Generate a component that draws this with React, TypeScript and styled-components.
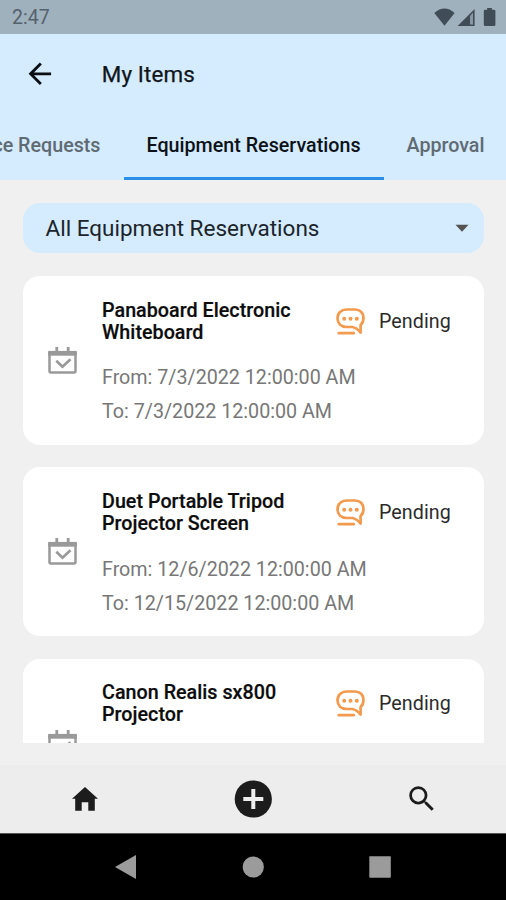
import React from 'react';
import styled, { createGlobalStyle } from 'styled-components';

const GlobalStyle = createGlobalStyle`
  * { box-sizing: border-box; }
  body { margin: 0; background: #f0f0f0; font-family: Roboto, "Liberation Sans", sans-serif; }
  svg { display: block; flex: none; }
`;

const Screen = styled.div`
  width: 506px;
  height: 900px;
  display: flex;
  flex-direction: column;
  overflow: hidden;
  background: #f0f0f0;
`;

const StatusBar = styled.div`
  height: 34px;
  flex: none;
  display: flex;
  align-items: center;
  justify-content: space-between;
  padding: 1px 9px 0 12px;
  background: #a0b1be;
  color: #54626d;
`;

const Clock = styled.span`
  font-size: 19.5px;
`;

const Header = styled.header`
  height: 146.3px;
  flex: none;
  display: flex;
  flex-direction: column;
  background: #d5ebfe;
`;

const TitleRow = styled.div`
  height: 79px;
  display: flex;
  align-items: center;
  padding-left: 23px;
  gap: 45px;
`;

const Title = styled.h1`
  margin: 0;
  font-size: 22.4px;
  font-weight: 400;
  letter-spacing: 0.15px;
  color: #10151a;
  -webkit-text-stroke: 0.25px currentColor;
`;

const Tabs = styled.nav`
  flex: 1;
  display: flex;
  overflow: hidden;
`;

const Tab = styled.div<{ $width: number; $active?: boolean; $alignEnd?: boolean }>`
  width: ${(p) => p.$width}px;
  flex: none;
  display: flex;
  align-items: center;
  justify-content: ${(p) => (p.$alignEnd ? 'flex-end' : 'flex-start')};
  padding: 1px 23px 0;
  white-space: nowrap;
  font-size: 19.7px;
  font-weight: 500;
  color: ${(p) => (p.$active ? '#0c1218' : '#5f6a73')};
  border-bottom: 3px solid ${(p) => (p.$active ? '#2a8fe8' : 'transparent')};
`;

const Content = styled.main`
  height: 562.7px;
  flex: none;
  padding: 22.7px 22px 0 23px;
  display: flex;
  flex-direction: column;
  gap: 22.8px;
  overflow: hidden;
`;

const Select = styled.div`
  height: 50.5px;
  flex: none;
  display: flex;
  align-items: center;
  justify-content: space-between;
  padding: 0 15px 0 22.5px;
  border-radius: 17px;
  background: #d5ebfe;
  font-size: 22.5px;
  color: #1b242b;
`;

const CardList = styled.div`
  display: flex;
  flex-direction: column;
  gap: 22.5px;
`;

const Card = styled.article`
  height: 168.7px;
  flex: none;
  display: grid;
  grid-template-columns: 79px 234px 1fr;
  border-radius: 17px;
  background: #fff;
`;

const IconCell = styled.div`
  display: flex;
  align-items: center;
  padding-left: 25px;
`;

const Details = styled.div`
  padding-top: 23.3px;
  white-space: nowrap;
`;

const ItemName = styled.h2`
  margin: 0 0 17px;
  font-size: 19.7px;
  line-height: 22.4px;
  font-weight: 500;
  letter-spacing: 0.03px;
  color: #0c0c0c;
  white-space: pre-line;
  -webkit-text-stroke: 0.2px currentColor;
`;

const DateLine = styled.p`
  margin: 0;
  font-size: 19.7px;
  line-height: 34px;
  color: #777;
`;

const Status = styled.div`
  height: 28px;
  margin-top: 31px;
  display: flex;
  align-items: center;
  gap: 14px;
  font-size: 19.7px;
  letter-spacing: 0.05px;
  color: #2b2b2b;
`;

const BottomNav = styled.nav`
  height: 68px;
  flex: none;
  margin-top: 22px;
  display: grid;
  grid-template-columns: repeat(3, 1fr);
  place-items: center;
  background: #ededed;
`;

const SystemNav = styled.div`
  flex: 1;
  display: flex;
  align-items: center;
  justify-content: space-between;
  padding: 0 115px;
  border-top: 1px solid #555;
  background: #000;
`;

const BackIcon = () => (
  <svg width="33.7" height="33.7" viewBox="0 0 24 24" fill="#0b0f13">
    <path d="M20 11H7.83l5.59-5.59L12 4l-8 8 8 8 1.41-1.41L7.83 13H20v-2z" />
  </svg>
);

const StatusIcons = () => (
  <svg width="64" height="19" viewBox="0 0 64 19" fill="#414d56">
    <path d="M1.300 4.900Q11.500-3.700 21.600 4.900L11.500 17.700z" />
    <path d="M24.600 18 41.600 1v17zM37 8.300v8h3V5.100z" fillRule="evenodd" />
    <path d="M37 8.300 40 5.100v11.200h-3z" fill="#8797a3" />
    <path d="M54.200 0h4.700v1.700h2.200q1.300 0 1.300 1.300v13.800q0 1.300-1.300 1.300h-9q-1.300 0-1.300-1.300V3q0-1.300 1.300-1.300h2.100z" />
  </svg>
);

const Caret = () => (
  <svg width="14" height="8" viewBox="0 0 14 8" fill="#55534f">
    <path d="M.5.700h13L7 7.700z" />
  </svg>
);

const CalendarIcon = () => (
  <svg width="29" height="27" viewBox="0 0 29 27" fill="none" stroke="#999">
    <path d="M1.500 5v19.500q0 .9.900.9h24.200q.9 0 .9-.9V5" strokeWidth="2.500" />
    <path d="M.200 6.300h28.600" strokeWidth="4.800" />
    <path d="M8.800 0v5M20.200 0v5" strokeWidth="2.800" />
    <path d="M8.300 13.700l6.200 6 8-7.500" strokeWidth="2.700" />
  </svg>
);

const PendingIcon = () => (
  <svg width="29" height="27" viewBox="0 0 29 27" fill="none" stroke="#f29a4d" strokeWidth="2.700">
    <path d="M10.500 1.500h8.500c5 0 8.500 3.400 8.500 8.400 0 3.400-1.100 5.400-2.900 7v7.700c-2.200-2.500-4.600-5-8.100-5.600h-6C5 18.700 1.500 15.300 1.500 10.300c0-5.200 3.800-8.800 9-8.800z" strokeLinejoin="round" />
    <path d="M2.800 25.200h15" strokeLinecap="round" />
    <g fill="#f29a4d" stroke="none">
      <circle cx="8.200" cy="10.800" r="2" />
      <circle cx="14.500" cy="10.800" r="2" />
      <circle cx="20.800" cy="10.800" r="2" />
    </g>
  </svg>
);

const HomeIcon = () => (
  <svg width="27" height="24" viewBox="0 0 27 24" fill="#1c1c1c">
    <path d="M14 0 27 11.700H23.800V23.700H17.300V15.300H10.700V23.700H4.200V11.700H1z" />
  </svg>
);

const AddIcon = () => (
  <svg width="38" height="38" viewBox="0 0 38 38">
    <circle cx="19.300" cy="19" r="18.600" fill="#1c1c1c" />
    <path d="M19.300 9v20M9.300 19h20" stroke="#eee" strokeWidth="4" />
  </svg>
);

const SearchIcon = () => (
  <svg width="33.7" height="33.7" viewBox="0 0 24 24" fill="#1c1c1c">
    <path d="M15.500 14h-.790l-.280-.270A6.471 6.471 0 0 0 16 9.500 6.500 6.500 0 1 0 9.500 16c1.610 0 3.090-.590 4.230-1.570l.270.280v.790l5 4.990L20.490 19l-4.990-5zm-6 0C7.010 14 5 11.990 5 9.500S7.010 5 9.500 5 14 7.010 14 9.500 11.990 14 9.500 14z" />
  </svg>
);

const SystemIcon = ({ shape }: { shape: 'back' | 'home' | 'recent' }) => (
  <svg width="22" height="24" viewBox="0 0 22 24" fill="#9b9b9b">
    {shape === 'back' && <path d="M0 12 21 0v24z" />}
    {shape === 'home' && <circle cx="11.300" cy="12" r="10.600" />}
    {shape === 'recent' && <rect x=".3" y="1.200" width="21.500" height="21.600" rx=".8" />}
  </svg>
);

const reservations = [
  { name: 'Panaboard Electronic\nWhiteboard', from: '7/3/2022 12:00:00 AM', to: '7/3/2022 12:00:00 AM' },
  { name: 'Duet Portable Tripod\nProjector Screen', from: '12/6/2022 12:00:00 AM', to: '12/15/2022 12:00:00 AM' },
  { name: 'Canon Realis sx800\nProjector', from: '12/6/2022 12:00:00 AM', to: '12/15/2022 12:00:00 AM' },
];

export default function App() {
  return (
    <>
      <GlobalStyle />
      <Screen>
        <StatusBar>
          <Clock>2:47</Clock>
          <StatusIcons />
        </StatusBar>
        <Header>
          <TitleRow>
            <BackIcon />
            <Title>My Items</Title>
          </TitleRow>
          <Tabs>
            <Tab $width={123.5} $alignEnd>Service Requests</Tab>
            <Tab $width={260} $active>Equipment Reservations</Tab>
            <Tab $width={122.5}>Approval</Tab>
          </Tabs>
        </Header>
        <Content>
          <Select>
            All Equipment Reservations
            <Caret />
          </Select>
          <CardList>
            {reservations.map((r) => (
              <Card key={r.name}>
                <IconCell><CalendarIcon /></IconCell>
                <Details>
                  <ItemName>{r.name}</ItemName>
                  <DateLine>From: {r.from}</DateLine>
                  <DateLine>To: {r.to}</DateLine>
                </Details>
                <Status>
                  <PendingIcon />
                  Pending
                </Status>
              </Card>
            ))}
          </CardList>
        </Content>
        <BottomNav>
          <HomeIcon />
          <AddIcon />
          <SearchIcon />
        </BottomNav>
        <SystemNav>
          <SystemIcon shape="back" />
          <SystemIcon shape="home" />
          <SystemIcon shape="recent" />
        </SystemNav>
      </Screen>
    </>
  );
}
